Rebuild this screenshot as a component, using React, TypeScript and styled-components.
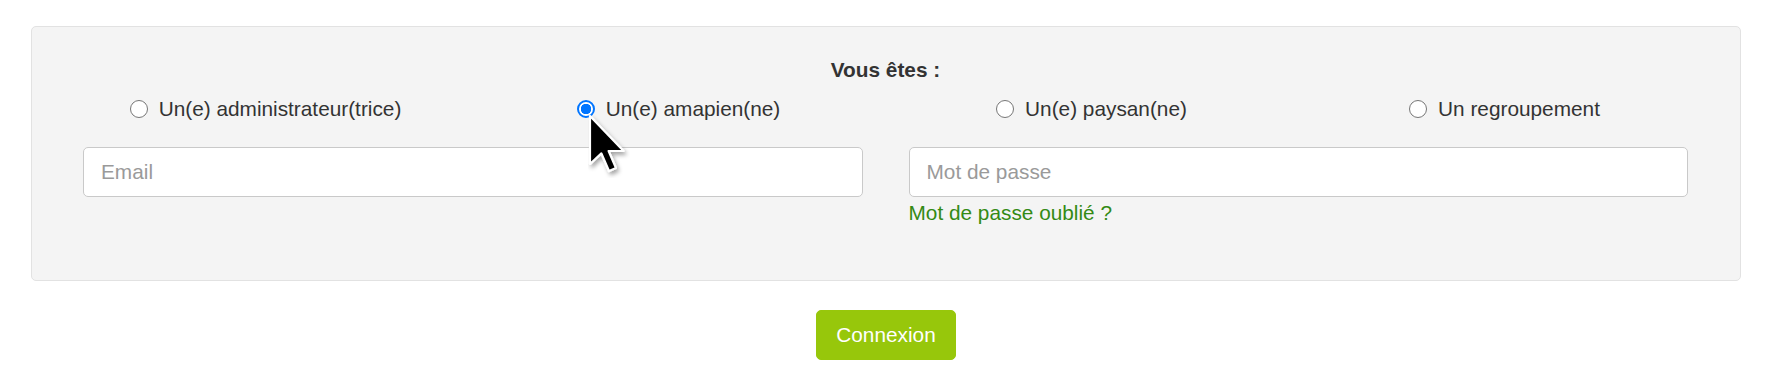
import React from "react";
import styled, { createGlobalStyle } from "styled-components";

const GlobalStyle = createGlobalStyle`
  body {
    margin: 0;
    background: #ffffff;
    font-family: "Liberation Sans", Arial, Helvetica, sans-serif;
    font-size: 20.8px;
    line-height: 1.5;
    color: #333333;
  }
`;

//Roles shown in the radio row
const roles = [
  { id: "admin", label: "Un(e) administrateur(trice)" },
  { id: "amapien", label: "Un(e) amapien(ne)" },
  { id: "paysan", label: "Un(e) paysan(ne)" },
  { id: "groupe", label: "Un regroupement" },
];

const App = () => {
  const [role, setRole] = React.useState("amapien");

  return (
    <Page>
      <GlobalStyle />
      <Panel>
        <Heading>Vous êtes :</Heading>
        <RoleRow>
          {roles.map((r) => (
            <RoleOption key={r.id}>
              <Radio
                type="radio"
                name="role"
                checked={role === r.id}
                onChange={() => setRole(r.id)}
              />
              {r.label}
            </RoleOption>
          ))}
        </RoleRow>
        <Fields>
          <Field>
            <Input type="email" placeholder="Email" />
          </Field>
          <Field>
            <Input type="password" placeholder="Mot de passe" />
            <ForgotLink href="#">Mot de passe oublié ?</ForgotLink>
          </Field>
        </Fields>
      </Panel>
      <Actions>
        <SubmitButton type="button">Connexion</SubmitButton>
      </Actions>
      <Pointer width="42" height="64" viewBox="-2 -2 42 64">
        <defs>
          <filter id="shadow" x="-30%" y="-30%" width="180%" height="180%">
            <feDropShadow dx="2" dy="3" stdDeviation="2" floodOpacity="0.35" />
          </filter>
        </defs>
        <path
          d="M0 0 L0 48 L11.4 37.4 L19 55 L26 52 L18.6 35 L33.6 35 Z"
          fill="#000"
          stroke="#fff"
          strokeWidth="2.2"
          strokeLinejoin="round"
          filter="url(#shadow)"
        />
      </Pointer>
    </Page>
  );
};

const Page = styled.div`
  position: relative;
  padding: 26px 35px 26px 31px;
`;

const Panel = styled.div`
  background: #f4f4f4;
  border: 1px solid #e2e2e2;
  border-radius: 5px;
  padding: 27px 52px 52px 51px;
`;

const Heading = styled.h3`
  margin: 0 0 8px;
  text-align: center;
  font-size: 20.8px;
  font-weight: bold;
  line-height: 1.5;
  color: #333333;
`;

const RoleRow = styled.div`
  display: grid;
  grid-template-columns: repeat(4, 1fr);
  margin: 0 -23px 23px -24px;
`;

const RoleOption = styled.label`
  display: flex;
  align-items: center;
  justify-content: center;
  height: 31px;
  color: #333333;
  cursor: pointer;
`;

const Radio = styled.input`
  appearance: none;
  box-sizing: border-box;
  flex: none;
  width: 18px;
  height: 18px;
  margin: 0 11px 0 0;
  border: 1.5px solid #767676;
  border-radius: 50%;
  background: #ffffff;
  cursor: pointer;
  &:checked {
    border: 2px solid #0075ff;
    background: radial-gradient(circle, #0075ff 0 5px, #ffffff 5.4px);
  }
`;

const Fields = styled.div`
  display: grid;
  grid-template-columns: 1fr 1fr;
  column-gap: 46px;
`;

const Field = styled.div`
  display: flex;
  flex-direction: column;
  align-items: flex-start;
`;

const Input = styled.input`
  box-sizing: border-box;
  width: 100%;
  height: 50px;
  padding: 0 17px;
  border: 1px solid #c9c9c9;
  border-radius: 5px;
  background: #ffffff;
  font-family: inherit;
  font-size: 20.8px;
  color: #333333;
  outline: none;
  &::placeholder {
    color: #9a9a9a;
  }
`;

const ForgotLink = styled.a`
  color: #338a14;
  text-decoration: none;
  line-height: 31px;
`;

const Actions = styled.div`
  display: flex;
  justify-content: center;
  padding-top: 29px;
`;

const SubmitButton = styled.button`
  height: 50px;
  padding: 0 19px;
  border: 1px solid #97c70b;
  border-radius: 5px;
  background: #97c70b;
  color: #ffffff;
  font-family: inherit;
  font-size: 20.8px;
  cursor: pointer;
`;

const Pointer = styled.svg`
  position: absolute;
  left: 588px;
  top: 114px;
  pointer-events: none;
`;

export default App;
